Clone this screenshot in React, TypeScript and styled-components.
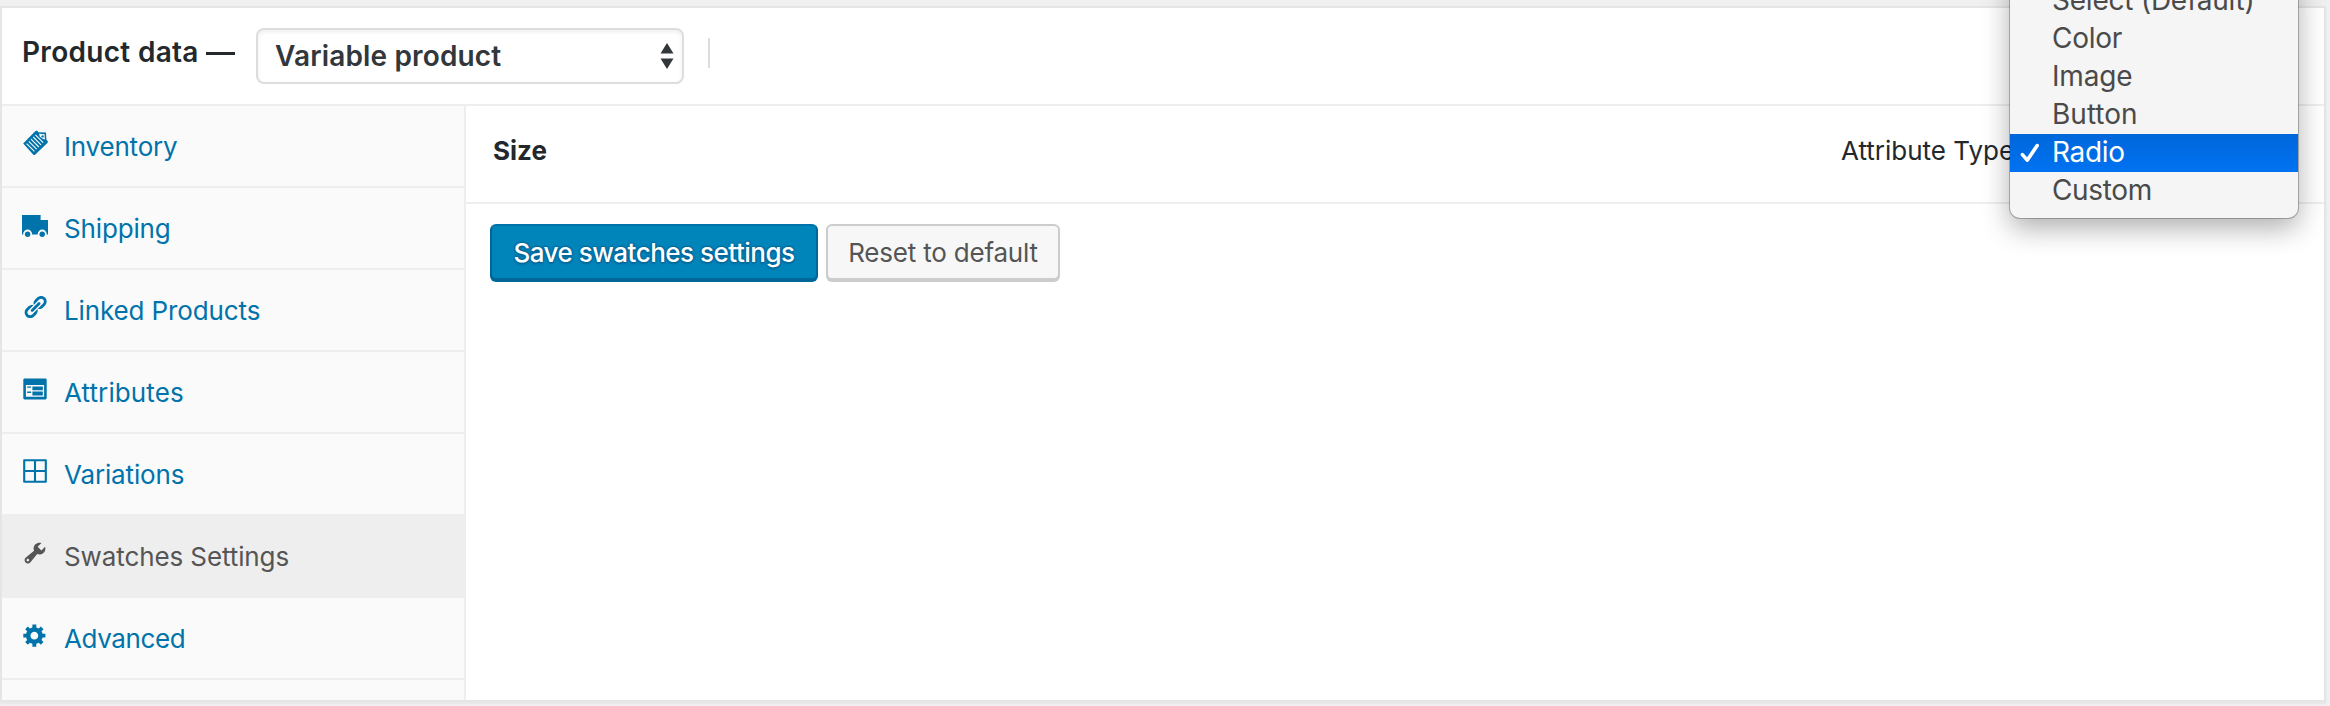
import React from 'react';
import styled, { createGlobalStyle, css } from 'styled-components';

const GlobalStyle = createGlobalStyle`
  * { box-sizing: border-box; }
  body { margin: 0; background: #f0f0f0; font-family: Inter, "Liberation Sans", sans-serif; }
`;

const Page = styled.div`
  position: relative;
  width: 2330px;
  height: 706px;
  padding-top: 6px;
  overflow: hidden;
  background: #f0f0f0;
`;

const Panel = styled.section`
  display: flex;
  flex-direction: column;
  width: 2326px;
  height: 696px;
  background: #fff;
  border: 2px solid #e5e5e5;
  box-shadow: 0 2px 2px rgba(0, 0, 0, 0.04);
`;

const Label = styled.span<{ $track?: number }>`
  letter-spacing: ${(p) => p.$track ?? 0}px;
  white-space: pre;
`;

const Header = styled.header`
  display: flex;
  align-items: flex-start;
  flex: none;
  height: 98px;
  padding: 20px 21px;
  border-bottom: 2px solid #eee;
`;

const Title = styled.h2`
  display: flex;
  width: 234px;
  margin: 8px 0 0 -1px;
  color: #23282d;
  font-size: 28px;
  font-weight: 600;
  line-height: 32px;
`;

const Dash = styled.span`
  width: 29px;
  height: 3px;
  margin: 16px 0 0 7px;
  background: #23282d;
`;

const TypeSelect = styled.div`
  display: flex;
  align-items: center;
  justify-content: space-between;
  width: 428px;
  height: 56px;
  padding: 0 8px 0 17px;
  border: 2px solid #ddd;
  border-radius: 8px;
  box-shadow: inset 0 2px 4px rgba(0, 0, 0, 0.07);
  color: #32373c;
  font-size: 28px;
  font-weight: 600;
  line-height: 32px;
`;

const Separator = styled.span`
  width: 2px;
  height: 30px;
  margin: 10px 0 0 24px;
  background: #ddd;
`;

const Body = styled.div`
  display: flex;
  flex: 1;
  min-height: 0;
`;

const Sidebar = styled.nav`
  width: 464px;
  flex: none;
  background: #fafafa;
  border-right: 2px solid #eee;
`;

const Tab = styled.a<{ $active?: boolean }>`
  display: flex;
  align-items: flex-start;
  gap: 16px;
  height: 82px;
  padding: 24px 0 0 20px;
  border-bottom: 2px solid #eee;
  color: #0073aa;
  font-size: 26px;
  line-height: 34px;
  ${(p) => p.$active && css`
    background: #eee;
    color: #555;
  `}
  svg { flex: none; }
`;

const Content = styled.main`
  flex: 1;
`;

const AttributeRow = styled.div`
  display: flex;
  align-items: flex-start;
  height: 98px;
  padding: 29px 0 0 27px;
  border-bottom: 2px solid #eee;
  color: #23282d;
  font-size: 26px;
  line-height: 32px;
`;

const AttributeName = styled.strong`
  width: 1348px;
  font-weight: 700;
`;

const Actions = styled.div`
  display: flex;
  gap: 8px;
  padding: 20px 24px;
`;

const Button = styled.button<{ $primary?: boolean }>`
  width: ${(p) => (p.$primary ? 328 : 234)}px;
  height: 56px;
  padding: 1px 0 0;
  border: 2px solid ${(p) => (p.$primary ? '#006799' : '#ccc')};
  border-top-color: ${(p) => (p.$primary ? '#0073aa' : '#ccc')};
  border-radius: 6px;
  background: ${(p) => (p.$primary ? '#0085ba' : '#f7f7f7')};
  box-shadow: 0 2px 0 ${(p) => (p.$primary ? '#006799' : '#ccc')};
  color: ${(p) => (p.$primary ? '#fff' : '#555')};
  font: ${(p) => (p.$primary ? 550 : 400)} 26px/36px Inter, "Liberation Sans", sans-serif;
  text-shadow: ${(p) => (p.$primary ? '0 -1px 2px #006799, 1px 0 2px #006799, 0 2px 2px #006799, -1px 0 2px #006799' : 'none')};
  white-space: nowrap;
`;

const Menu = styled.ul`
  position: absolute;
  top: -26px;
  left: 2010px;
  width: 288px;
  margin: 0;
  padding: 8px 0;
  list-style: none;
  background: #f5f5f5;
  border-radius: 10px;
  box-shadow: 0 0 0 1px rgba(0, 0, 0, 0.25), 0 10px 28px rgba(0, 0, 0, 0.32);
`;

const Option = styled.li<{ $selected?: boolean }>`
  display: flex;
  align-items: center;
  height: 38px;
  padding-bottom: 2px;
  color: ${(p) => (p.$selected ? '#fff' : '#4a4a4a')};
  background: ${(p) => (p.$selected ? 'linear-gradient(#0067da, #0072f2)' : 'none')};
  font-size: 28px;
  line-height: 36px;
`;

const CheckSlot = styled.span`
  display: flex;
  width: 42px;
  padding: 1px 0 0 10px;
  flex: none;
`;

const Icon = ({ box = 20, children }: { box?: number; children: React.ReactNode }) => (
  <svg width="26" height="26" viewBox={`0 0 ${box} ${box}`} fill="currentColor">{children}</svg>
);

const icons = {
  inventory: (
    <Icon box={26}>
      <path d="M1.2 13.4 13.2 1.2 15 .6 16.5 2.2 24 2.6 24.4 9.8 26 11.4 25.4 13 12.8 25 11.6 25Z" />
      <path d="M4.6 13.6 12.4 21.4M6.8 11.4 14.6 19.2M9 9.2 16.8 17M11.2 7 19 14.8M13.4 4.8 21.2 12.6" stroke="#fafafa" strokeWidth="1.1" fill="none" />
      <path d="M17 3.8 22.6 4.2 22.9 9.5 20.5 8.8 17.8 6.5Z" fill="#fafafa" />
      <circle cx="20.6" cy="6.4" r="1.2" />
    </Icon>
  ),
  shipping: (
    <Icon box={26}>
      <path d="M0 3H18.6V8H26V22.5H0Z" />
      <circle cx="5.6" cy="22.1" r="4.5" fill="#fafafa" />
      <circle cx="20.2" cy="22.1" r="4.5" fill="#fafafa" />
      <circle cx="5.6" cy="22.3" r="2.7" />
      <circle cx="20.2" cy="22.3" r="2.7" />
    </Icon>
  ),
  link: (
    <Icon>
      <path d="M17.74 2.76c1.68 1.69 1.68 4.41 0 6.1l-1.53 1.52c-1.12 1.12-2.7 1.47-4.14 1.09l2.62-2.61.76-.77.76-.76c.84-.84.84-2.2 0-3.04-.84-.85-2.2-.85-3.04 0l-.77.76-3.38 3.38c-.37-1.44-.02-3.02 1.1-4.14l1.52-1.53c1.69-1.68 4.42-1.68 6.1 0zM8.59 13.43l5.34-5.34c.42-.42.42-1.1 0-1.52-.44-.43-1.13-.39-1.53 0l-5.33 5.34c-.42.42-.42 1.1 0 1.52.44.43 1.13.39 1.52 0zm-.76 2.29l4.14-4.15c.38 1.44.03 3.02-1.09 4.14l-1.52 1.53c-1.69 1.68-4.41 1.68-6.1 0-1.68-1.68-1.68-4.42 0-6.1l1.53-1.52c1.12-1.12 2.7-1.47 4.14-1.1l-4.14 4.15c-.85.84-.85 2.2 0 3.05.84.84 2.2.84 3.04 0z" />
    </Icon>
  ),
  attributes: (
    <Icon>
      <path d="M2 2h16c.55 0 1 .45 1 1v14c0 .55-.45 1-1 1H2c-.55 0-1-.45-1-1V3c0-.55.45-1 1-1zm15 14V7H3v9h14zM4 8v1h3V8H4zm4 0v3h8V8H8zm-4 4v1h3v-1H4zm4 0v3h8v-3H8z" />
    </Icon>
  ),
  variations: (
    <Icon box={26}>
      <path d="M2.2 2.2H23.8V23.8H2.2ZM13 2V24M2 13H24" fill="none" stroke="currentColor" strokeWidth="2.1" strokeLinejoin="round" />
    </Icon>
  ),
  wrench: (
    <Icon>
      <path d="M16.68 9.77c-1.34 1.34-3.3 1.67-4.95.99l-5.41 6.52c-.99.99-2.59.99-3.58 0s-.99-2.59 0-3.57l6.52-5.42c-.68-1.65-.35-3.61.99-4.95 1.28-1.28 3.12-1.62 4.72-1.06l-2.89 2.89 2.82 2.82 2.86-2.87c.53 1.58.18 3.39-1.08 4.65zM3.81 16.21c.4.39 1.04.39 1.43 0 .4-.4.4-1.04 0-1.43-.39-.4-1.03-.4-1.43 0-.39.39-.39 1.03 0 1.43z" />
    </Icon>
  ),
  gear: (
    <Icon>
      <path d="M18 12h-2.18c-.17.7-.44 1.35-.81 1.93l1.54 1.54-2.1 2.1-1.54-1.54c-.58.36-1.23.63-1.91.79V19H8v-2.18c-.68-.16-1.33-.43-1.91-.79l-1.54 1.54-2.12-2.12 1.54-1.54c-.36-.58-.63-1.23-.79-1.91H1V9.03h2.17c.16-.7.44-1.35.8-1.94L2.43 5.55l2.1-2.1 1.54 1.54c.58-.37 1.24-.64 1.93-.81V2h3v2.18c.68.16 1.33.43 1.91.79l1.54-1.54 2.12 2.12-1.54 1.54c.36.59.64 1.24.8 1.94H18V12zm-8.5 1.5c1.66 0 3-1.34 3-3s-1.34-3-3-3-3 1.34-3 3 1.34 3 3 3z" />
    </Icon>
  ),
};

const tabs = [
  { label: 'Inventory', icon: icons.inventory, track: -0.2 },
  { label: 'Shipping', icon: icons.shipping, track: -0.15 },
  { label: 'Linked Products', icon: icons.link, track: -0.12 },
  { label: 'Attributes', icon: icons.attributes, track: 0.1 },
  { label: 'Variations', icon: icons.variations, track: -0.15 },
  { label: 'Swatches Settings', icon: icons.wrench, track: -0.1, active: true },
  { label: 'Advanced', icon: icons.gear, track: -0.4 },
];

const options = [
  { label: 'Select (Default)', track: -0.22 },
  { label: 'Color', track: -0.25 },
  { label: 'Image', track: -0.2 },
  { label: 'Button', track: 0 },
  { label: 'Radio', track: -0.3, selected: true },
  { label: 'Custom', track: -0.35 },
];

export default function App() {
  return (
    <Page>
      <GlobalStyle />
      <Panel>
        <Header>
          <Title>
            <Label $track={0.3}>Product data</Label>
            <Dash />
          </Title>
          <TypeSelect>
            <Label $track={0.15}>Variable product</Label>
            <svg width="14" height="28" viewBox="0 0 14 28" fill="#32373c">
              <path d="M7 1 13.5 11.5H.5ZM7 27 .5 16.5H13.5Z" />
            </svg>
          </TypeSelect>
          <Separator />
        </Header>
        <Body>
          <Sidebar>
            {tabs.map((t) => (
              <Tab key={t.label} $active={t.active}>
                {t.icon}
                <Label $track={t.track}>{t.label}</Label>
              </Tab>
            ))}
          </Sidebar>
          <Content>
            <AttributeRow>
              <AttributeName><Label>Size</Label></AttributeName>
              <Label>Attribute Type</Label>
            </AttributeRow>
            <Actions>
              <Button $primary><Label $track={-0.5}>Save swatches settings</Label></Button>
              <Button><Label $track={-0.2}>Reset to default</Label></Button>
            </Actions>
          </Content>
        </Body>
      </Panel>
      <Menu>
        {options.map((o) => (
          <Option key={o.label} $selected={o.selected}>
            <CheckSlot>
              {o.selected && (
                <svg width="20" height="20" viewBox="0 0 20 20" fill="none" stroke="#fff" strokeWidth="3.6" strokeLinecap="round" strokeLinejoin="round">
                  <path d="M2.4 11.6 7.2 17.2 17.2 2.6" />
                </svg>
              )}
            </CheckSlot>
            <Label $track={o.track}>{o.label}</Label>
          </Option>
        ))}
      </Menu>
    </Page>
  );
}
